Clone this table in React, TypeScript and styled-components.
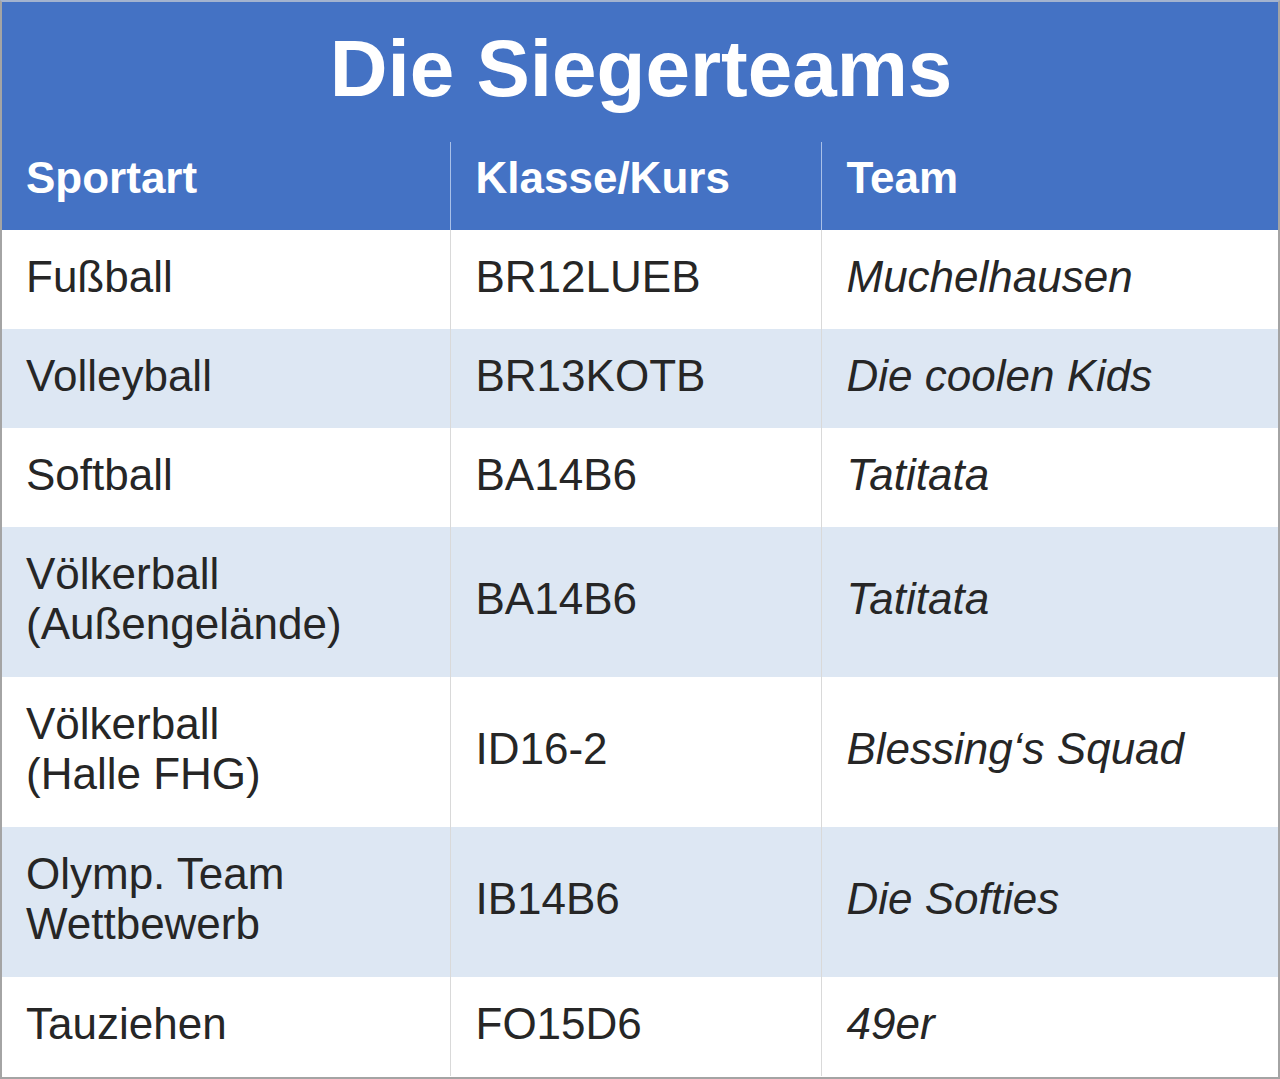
import React from 'react';
import styled, { createGlobalStyle } from 'styled-components';

const GlobalStyle = createGlobalStyle`
  html, body {
    margin: 0;
    padding: 0;
    background: #ffffff;
  }
  * {
    box-sizing: border-box;
  }
`;

type Row = {
  sport: string[];
  klasse: string;
  team: string;
};

const rows: Row[] = [
  { sport: ['Fußball'], klasse: 'BR12LUEB', team: 'Muchelhausen' },
  { sport: ['Volleyball'], klasse: 'BR13KOTB', team: 'Die coolen Kids' },
  { sport: ['Softball'], klasse: 'BA14B6', team: 'Tatitata' },
  { sport: ['Völkerball', '(Außengelände)'], klasse: 'BA14B6', team: 'Tatitata' },
  { sport: ['Völkerball', '(Halle FHG)'], klasse: 'ID16-2', team: 'Blessing‘s Squad' },
  { sport: ['Olymp. Team', 'Wettbewerb'], klasse: 'IB14B6', team: 'Die Softies' },
  { sport: ['Tauziehen'], klasse: 'FO15D6', team: '49er' },
];

const App = () => {
  return (
    <>
      <GlobalStyle />
      <Frame>
        <TitleBar>Die Siegerteams</TitleBar>
        <Table>
          <colgroup>
            <col style={{ width: 448 }} />
            <col style={{ width: 371 }} />
            <col />
          </colgroup>
          <thead>
            <tr>
              <HeadCell>Sportart</HeadCell>
              <HeadCell $divider>Klasse/Kurs</HeadCell>
              <HeadCell $divider>Team</HeadCell>
            </tr>
          </thead>
          <tbody>
            {rows.map((row, i) => (
              <BodyRow key={i} $shaded={i % 2 === 1} $tall={row.sport.length > 1}>
                <Cell>
                  {row.sport.map((line, j) => (
                    <Line key={j}>{line}</Line>
                  ))}
                </Cell>
                <Cell $divider>{row.klasse}</Cell>
                <Cell $divider $italic>
                  {row.team}
                </Cell>
              </BodyRow>
            ))}
          </tbody>
        </Table>
      </Frame>
    </>
  );
};

export default App;

const Frame = styled.div`
  width: 1280px;
  height: 1079px;
  border: 2px solid #a4a4a4;
  border-top-color: #a3b3cf;
  background: #ffffff;
  font-family: 'Liberation Sans', Arial, sans-serif;
  overflow: hidden;
`;

const TitleBar = styled.div`
  height: 140px;
  background: #4472c4;
  color: #ffffff;
  font-weight: bold;
  font-size: 80px;
  line-height: 80px;
  padding-top: 27px;
  text-align: center;
  padding-left: 2px;
`;

const Table = styled.table`
  width: 100%;
  border-collapse: collapse;
  table-layout: fixed;
`;

const HeadCell = styled.th<{ $divider?: boolean }>`
  height: 88px;
  background: #4472c4;
  color: #ffffff;
  font-size: 44px;
  line-height: 50px;
  font-weight: bold;
  text-align: left;
  vertical-align: top;
  padding: 11px 0 0 ${(p) => (p.$divider ? '25px' : '24px')};
  border-left: ${(p) => (p.$divider ? '1px solid #a9c0e8' : 'none')};
  white-space: nowrap;
`;

const BodyRow = styled.tr<{ $shaded: boolean; $tall: boolean }>`
  height: ${(p) => (p.$tall ? '150px' : '99px')};
  background: ${(p) => (p.$shaded ? '#dde7f3' : '#ffffff')};
`;

const Cell = styled.td<{ $divider?: boolean; $italic?: boolean }>`
  color: #262626;
  font-size: 44px;
  line-height: 50px;
  font-style: ${(p) => (p.$italic ? 'italic' : 'normal')};
  vertical-align: middle;
  padding: 0 0 6px ${(p) => (p.$divider ? '25px' : '24px')};
  border-left: ${(p) => (p.$divider ? '1px solid #d9d9d9' : 'none')};
  white-space: nowrap;
`;

const Line = styled.div`
  display: block;
`;
